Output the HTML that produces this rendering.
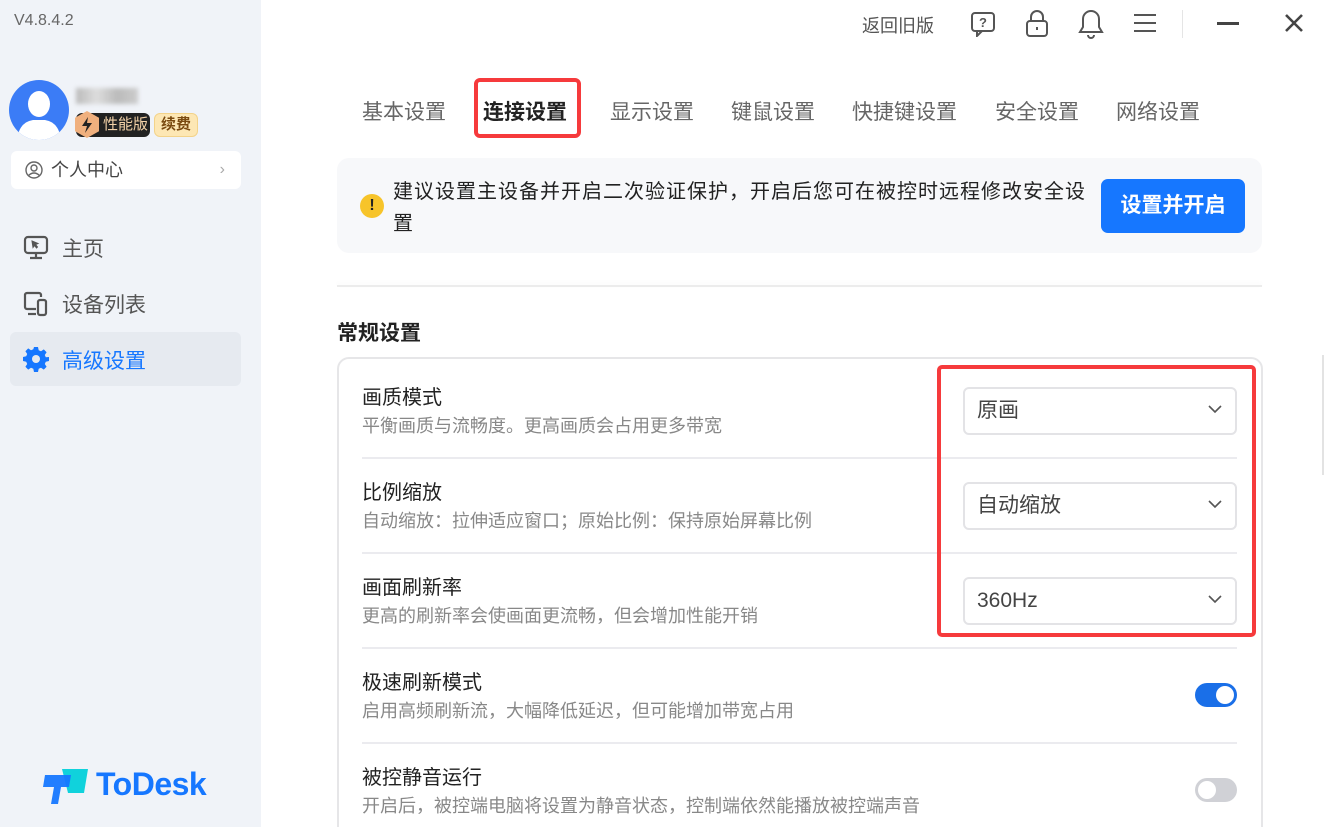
<!DOCTYPE html>
<html><head><meta charset="utf-8"><style>
*{margin:0;padding:0;box-sizing:border-box}
html,body{width:1325px;height:827px;overflow:hidden}
body{background:#fff;font-family:"Liberation Sans","Noto Sans CJK SC",sans-serif;position:relative;color:#222}
.a{position:absolute;white-space:nowrap}
#side{position:absolute;left:0;top:0;width:261px;height:827px;background:#f0f3f8}
.tab{position:absolute;top:99px;font-size:21px;color:#666;line-height:28px}
.t{font-size:20px;color:#222;line-height:26px}
.s{font-size:18px;color:#888;line-height:24px}
.sep{position:absolute;left:362px;width:875px;height:2px;background:#ebebef}
.dd{position:absolute;left:963px;width:274px;height:48px;border:2px solid #e3e3e6;border-radius:6px;background:#fff;font-size:21px;color:#444;padding-left:12px;line-height:44px}
.dd svg{position:absolute;right:12px;top:15px}
.tg{position:absolute;left:1195px;width:42px;height:24px;border-radius:12px}
.tg i{position:absolute;top:3px;width:18px;height:18px;border-radius:50%;background:#fff}
</style></head><body>
<div id="side">
<div class="a" style="left:14px;top:12px;font-size:16px;color:#666">V4.8.4.2</div>
<div class="a" style="left:9px;top:80px;width:60px;height:60px;border-radius:50%;background:#3b7cf6;overflow:hidden">
<svg width="60" height="60" viewBox="0 0 60 60"><ellipse cx="30" cy="24" rx="11" ry="13" fill="#fff"/><path d="M8 60 Q10 42 24 40 L36 40 Q50 42 52 60Z" fill="#fff"/></svg></div>
<div class="a" style="left:76px;top:88px;width:62px;height:16px;background:linear-gradient(90deg,#bbb,#ddd,#bbb,#ccc);filter:blur(2px)"></div>
<div class="a" style="left:76px;top:113px;width:74px;height:24px;border-radius:6px;background:#222;color:#f3d2a8;font-size:15px;line-height:24px;padding-left:27px">性能版</div>
<div class="a" style="left:75px;top:111px;width:24px;height:27px;background:#f0b07e;clip-path:polygon(50% 0,100% 25%,100% 75%,50% 100%,0 75%,0 25%)">
<svg width="24" height="27" viewBox="0 0 24 27"><path d="M13 6l-6 9h5l-2 7 7-10h-5z" fill="#222"/></svg></div>
<div class="a" style="left:154px;top:113px;width:44px;height:24px;border-radius:6px;background:#fde7b4;border:1px solid #f3d38a;color:#7a4a10;font-size:15px;line-height:22px;text-align:center;font-weight:bold">续费</div>
<div class="a" style="left:11px;top:151px;width:230px;height:38px;border-radius:6px;background:#fff;font-size:18px;color:#444;line-height:38px;padding-left:40px">个人中心
<svg class="a" style="left:14px;top:10px" width="18" height="18" viewBox="0 0 18 18" fill="none" stroke="#666" stroke-width="1.4"><circle cx="9" cy="9" r="8"/><circle cx="9" cy="7" r="3"/><path d="M3.5 14.5 Q9 9.5 14.5 14.5"/></svg>
<span class="a" style="right:16px;top:0;color:#aaa;font-size:16px">›</span></div>
<svg class="a" style="left:23px;top:235px" width="26" height="26" viewBox="0 0 26 26" fill="none" stroke="#555" stroke-width="2.2"><rect x="2" y="2" width="22" height="16" rx="3"/><path d="M13 18v5M7 23h12"/><path d="M9 6l6 2.5-2.5 1 2 2.5-1 1-2-2.5-1.5 2z" fill="#555" stroke-width="1"/></svg>
<div class="a" style="left:62px;top:233px;font-size:21px;color:#555">主页</div>
<svg class="a" style="left:23px;top:291px" width="26" height="26" viewBox="0 0 26 26" fill="none" stroke="#555" stroke-width="2.2"><path d="M18 6V4a2 2 0 0 0-2-2H4a2 2 0 0 0-2 2v12a2 2 0 0 0 2 2h9"/><path d="M5 23h8"/><rect x="15" y="9" width="8" height="15" rx="2"/></svg>
<div class="a" style="left:62px;top:289px;font-size:21px;color:#555">设备列表</div>
<div class="a" style="left:10px;top:332px;width:231px;height:54px;border-radius:6px;background:#e6eaf0"></div>
<svg class="a" style="left:23px;top:346px" width="26" height="26" viewBox="0 0 26 26"><path fill="#1677ff" d="M11 1h4l.7 3.2 2.3 1 2.8-1.8 2.8 2.8-1.8 2.8 1 2.3L26 11v4l-3.2.7-1 2.3 1.8 2.8-2.8 2.8-2.8-1.8-2.3 1L15 26h-4l-.7-3.2-2.3-1-2.8 1.8-2.8-2.8 1.8-2.8-1-2.3L0 15v-4l3.2-.7 1-2.3-1.8-2.8 2.8-2.8 2.8 1.8 2.3-1z"/><circle cx="13" cy="13" r="4" fill="#e6eaf0"/></svg>
<div class="a" style="left:62px;top:345px;font-size:21px;color:#1677ff">高级设置</div>
<svg class="a" style="left:42px;top:767px" width="48" height="38" viewBox="0 0 48 38"><path d="M20 2h26l-4 24H26l-2-8z" fill="#10d2dc"/><path d="M3 8h26l-2 12h-8l-3 17H9l3-17H1z" fill="#1677ff" opacity=".95"/></svg>
<div class="a" style="left:96px;top:766px;font-size:32px;font-weight:bold;color:#1677ff;letter-spacing:-.5px">ToDesk</div>
</div>

<div class="a" style="left:862px;top:12px;font-size:18px;color:#555">返回旧版</div>
<svg class="a" style="left:970px;top:11px" width="26" height="26" viewBox="0 0 26 26" fill="none" stroke="#555" stroke-width="2"><rect x="2" y="2" width="22" height="18" rx="3"/><path d="M7 20v5l5-5"/><text x="13" y="16" font-size="13" font-weight="bold" fill="#555" stroke="none" text-anchor="middle" font-family="Liberation Sans">?</text></svg>
<svg class="a" style="left:1025px;top:9px" width="24" height="28" viewBox="0 0 24 28" fill="none" stroke="#555" stroke-width="2"><path d="M6 12V8a6 6 0 0 1 12 0v4"/><rect x="2" y="12" width="20" height="15" rx="3"/><path d="M12 18v3"/></svg>
<svg class="a" style="left:1078px;top:9px" width="26" height="30" viewBox="0 0 26 30" fill="none" stroke="#555" stroke-width="2"><path d="M13 2a8 8 0 0 0-8 8v8l-3 5h22l-3-5v-8a8 8 0 0 0-8-8z"/><path d="M10 26a3 3 0 0 0 6 0"/></svg>
<svg class="a" style="left:1133px;top:13px" width="24" height="20" viewBox="0 0 24 20" stroke="#555" stroke-width="2"><path d="M1 2h22M1 10h22M1 18h22"/></svg>
<div class="a" style="left:1182px;top:10px;width:1px;height:28px;background:#e5e5e5"></div>
<div class="a" style="left:1217px;top:22px;width:22px;height:3px;background:#444"></div>
<svg class="a" style="left:1284px;top:13px" width="20" height="20" viewBox="0 0 20 20" stroke="#444" stroke-width="2.6"><path d="M2 2l16 16M18 2L2 18"/></svg>

<div class="tab" style="left:362px">基本设置</div>
<div class="tab" style="left:483px;color:#222;font-weight:bold">连接设置</div>
<div class="a" style="left:474px;top:78px;width:107px;height:60px;border:4px solid #f63a3c;border-radius:6px"></div>
<div class="tab" style="left:610px">显示设置</div>
<div class="tab" style="left:731px">键鼠设置</div>
<div class="tab" style="left:852px">快捷键设置</div>
<div class="tab" style="left:995px">安全设置</div>
<div class="tab" style="left:1116px">网络设置</div>

<div class="a" style="left:337px;top:158px;width:925px;height:95px;border-radius:12px;background:#f7f8fa"></div>
<div class="a" style="left:360px;top:194px;width:24px;height:24px;border-radius:50%;background:#f7c42a;text-align:center;font-weight:bold;font-size:16px;line-height:24px;color:#222">!</div>
<div class="a" style="left:393px;top:176px;font-size:20px;letter-spacing:1px;line-height:32px;color:#222;white-space:normal;width:700px">建议设置主设备并开启二次验证保护，开启后您可在被控时远程修改安全设置</div>
<div class="a" style="left:1101px;top:179px;width:144px;height:54px;border-radius:7px;background:#1677ff;color:#fff;font-size:21px;font-weight:bold;text-align:center;line-height:54px">设置并开启</div>

<div class="a" style="left:337px;top:285px;width:925px;height:2px;background:#ececec;box-shadow:0 -2px 4px rgba(0,0,0,.03)"></div>
<div class="a" style="left:337px;top:317px;font-size:21px;font-weight:bold;color:#222">常规设置</div>
<div class="a" style="left:337px;top:357px;width:926px;height:500px;border:2px solid #e6e6e8;border-radius:12px"></div>

<div class="a t" style="left:362px;top:385px">画质模式</div>
<div class="a s" style="left:362px;top:414px">平衡画质与流畅度。更高画质会占用更多带宽</div>
<div class="dd" style="top:387px">原画<svg width="16" height="10" viewBox="0 0 16 10" fill="none" stroke="#555" stroke-width="1.6"><path d="M2 2l6 6 6-6"/></svg></div>
<div class="sep" style="top:457px"></div>
<div class="a t" style="left:362px;top:480px">比例缩放</div>
<div class="a s" style="left:362px;top:509px">自动缩放：拉伸适应窗口；原始比例：保持原始屏幕比例</div>
<div class="dd" style="top:482px">自动缩放<svg width="16" height="10" viewBox="0 0 16 10" fill="none" stroke="#555" stroke-width="1.6"><path d="M2 2l6 6 6-6"/></svg></div>
<div class="sep" style="top:552px"></div>
<div class="a t" style="left:362px;top:575px">画面刷新率</div>
<div class="a s" style="left:362px;top:604px">更高的刷新率会使画面更流畅，但会增加性能开销</div>
<div class="dd" style="top:577px">360Hz<svg width="16" height="10" viewBox="0 0 16 10" fill="none" stroke="#555" stroke-width="1.6"><path d="M2 2l6 6 6-6"/></svg></div>
<div class="a" style="left:937px;top:365px;width:319px;height:272px;border:4px solid #f63a3c;border-radius:5px"></div>
<div class="sep" style="top:647px"></div>
<div class="a t" style="left:362px;top:670px">极速刷新模式</div>
<div class="a s" style="left:362px;top:699px">启用高频刷新流，大幅降低延迟，但可能增加带宽占用</div>
<div class="tg" style="top:683px;background:#1a6fe8"><i style="right:3px"></i></div>
<div class="sep" style="top:742px"></div>
<div class="a t" style="left:362px;top:765px">被控静音运行</div>
<div class="a s" style="left:362px;top:794px">开启后，被控端电脑将设置为静音状态，控制端依然能播放被控端声音</div>
<div class="tg" style="top:778px;background:#d0d1d6"><i style="left:3px"></i></div>
<div class="a" style="left:1322px;top:355px;width:2px;height:120px;background:#e3e3e3"></div>
</body></html>
